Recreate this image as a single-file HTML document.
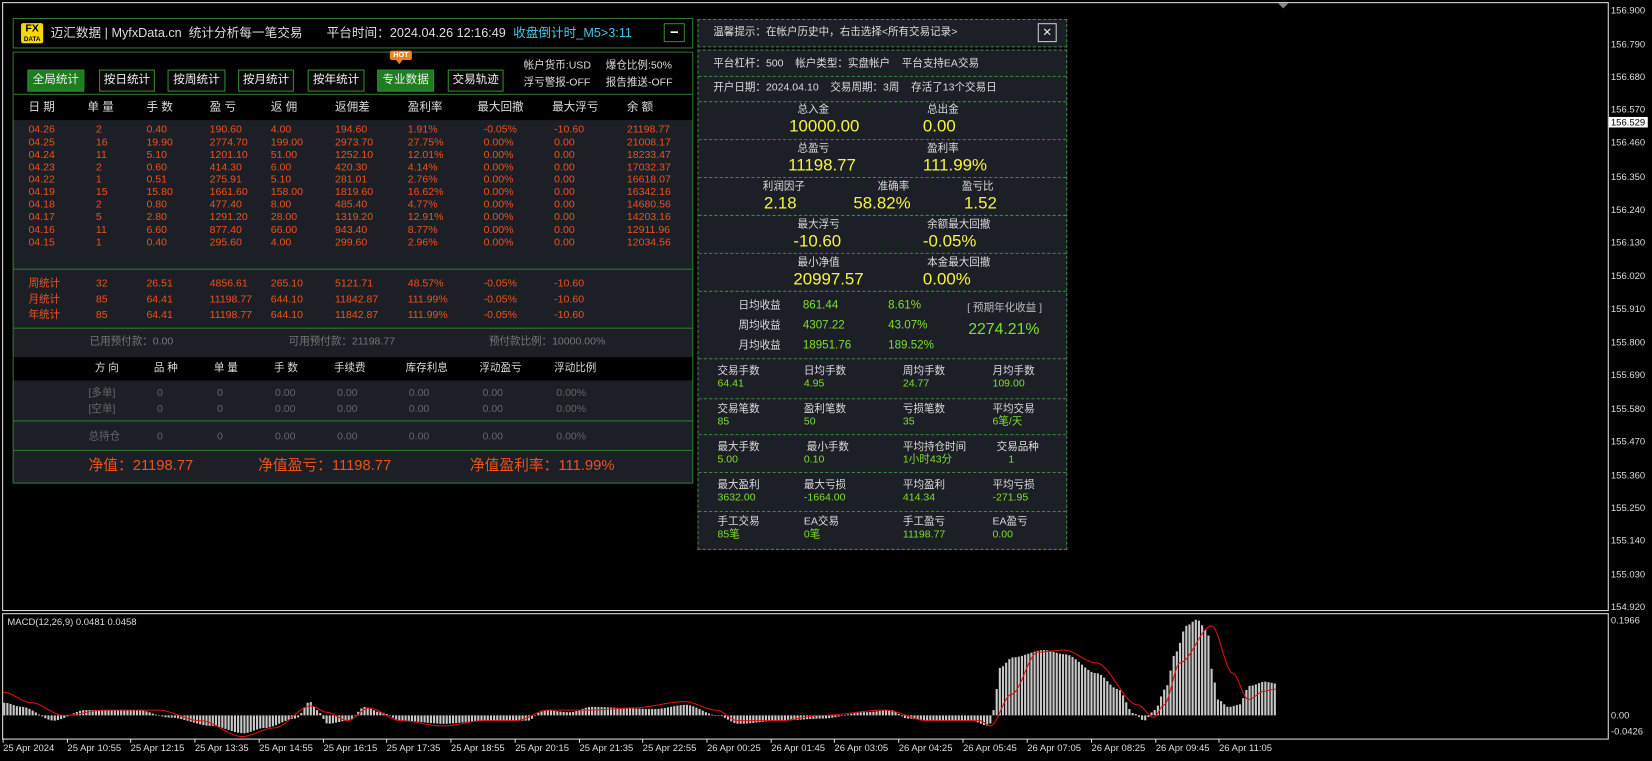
<!DOCTYPE html>
<html><head><meta charset="utf-8">
<style>
html,body{margin:0;padding:0;background:#000;width:1652px;height:760px;overflow:hidden}
#w{position:absolute;left:0;top:0;width:1568px;height:722px;transform:scale(1.05357);transform-origin:0 0;font-family:"Liberation Sans","Noto Sans CJK SC",sans-serif;color:#ddd}
#w div{white-space:nowrap}
.a{position:absolute;white-space:nowrap;line-height:14px}
.f11{font-size:11px}.f10{font-size:10px}
.o{color:#f0521c}.g{color:#777}.gg{color:#666}.y{color:#f5f53c;font-size:16px;line-height:18px}.gr{color:#7be02c}
.box{position:absolute;box-sizing:border-box}
.btn{position:absolute;top:66px;height:21px;box-sizing:border-box;border:1px solid #2f8a2f;font-size:11px;line-height:19px;text-align:center;color:#eee;background:#0a0a0a}
.btn.on{background:#1e7d1e}
.dl{position:absolute;left:663px;width:349px;border-top:1px dashed #3a8a3a;height:0}
.px{position:absolute;left:1529px;font-size:9px;color:#ddd;line-height:10px}
.tl{position:absolute;top:705px;font-size:9px;color:#ddd;line-height:10px}
</style></head><body><div id="w">
<div class="box" style="left:2px;top:2px;width:1525px;height:578px;border:1px solid #ddd"></div>
<div class="box" style="left:2px;top:582px;width:1525px;height:120px;border:1px solid #ddd"></div>
<div style="position:absolute;left:1213px;top:3px;width:0;height:0;border-left:5px solid transparent;border-right:5px solid transparent;border-top:5px solid #888"></div>
<div class="px" style="top:5px">156.900</div><div class="px" style="top:37px">156.790</div><div class="px" style="top:68px">156.680</div><div class="px" style="top:99px">156.570</div>
<div class="px" style="top:111px;background:#fff;color:#000;left:1527px;padding:0 2px">156.529</div>
<div class="px" style="top:130px">156.460</div><div class="px" style="top:163px">156.350</div><div class="px" style="top:194px">156.240</div><div class="px" style="top:225px">156.130</div><div class="px" style="top:257px">156.020</div><div class="px" style="top:288px">155.910</div><div class="px" style="top:320px">155.800</div><div class="px" style="top:351px">155.690</div><div class="px" style="top:383px">155.580</div><div class="px" style="top:414px">155.470</div><div class="px" style="top:446px">155.360</div><div class="px" style="top:477px">155.250</div><div class="px" style="top:508px">155.140</div><div class="px" style="top:540px">155.030</div><div class="px" style="top:571px">154.920</div>
<div class="px" style="top:584px">0.1966</div><div class="px" style="top:674px">0.00</div><div class="px" style="top:689px">-0.0426</div>
<div class="a f10" style="left:7px;top:583px;font-size:9px">MACD(12,26,9) 0.0481 0.0458</div>
<svg id="mc" style="position:absolute;left:0;top:0" width="1568" height="722"></svg>
<div class="tl" style="left:3px">25 Apr 2024</div><div class="tl" style="left:64px">25 Apr 10:55</div><div class="tl" style="left:124px">25 Apr 12:15</div><div class="tl" style="left:185px">25 Apr 13:35</div><div class="tl" style="left:246px">25 Apr 14:55</div><div class="tl" style="left:307px">25 Apr 16:15</div><div class="tl" style="left:367px">25 Apr 17:35</div><div class="tl" style="left:428px">25 Apr 18:55</div><div class="tl" style="left:489px">25 Apr 20:15</div><div class="tl" style="left:550px">25 Apr 21:35</div><div class="tl" style="left:610px">25 Apr 22:55</div><div class="tl" style="left:671px">26 Apr 00:25</div><div class="tl" style="left:732px">26 Apr 01:45</div><div class="tl" style="left:792px">26 Apr 03:05</div><div class="tl" style="left:853px">26 Apr 04:25</div><div class="tl" style="left:914px">26 Apr 05:45</div><div class="tl" style="left:975px">26 Apr 07:05</div><div class="tl" style="left:1036px">26 Apr 08:25</div><div class="tl" style="left:1097px">26 Apr 09:45</div><div class="tl" style="left:1157px">26 Apr 11:05</div>

<div class="box" style="left:12px;top:17px;width:646px;height:29px;border:1px solid #2f7a2f;background:#000"></div>
<div class="box" style="left:20px;top:22px;width:21px;height:19px;background:#f5d800;border-radius:2px;color:#000;font-weight:bold;text-align:center;font-size:10px;line-height:9px;padding-top:1px">FX<br><span style="font-size:6px;line-height:7px">DATA</span></div>
<div class="a" style="left:48px;top:24px;font-size:12px">迈汇数据 | MyfxData.cn&nbsp; 统计分析每一笔交易</div>
<div class="a" style="left:310px;top:24px;font-size:12px">平台时间：2024.04.26 12:16:49</div>
<div class="a" style="left:487px;top:24px;font-size:12px;color:#3ec8ea">收盘倒计时_M5&gt;3:11</div>
<div class="box" style="left:630px;top:22px;width:20px;height:18px;border:1px solid #2f8a2f;color:#fff;text-align:center;font-size:14px;line-height:15px;font-weight:bold">−</div>

<div class="box" style="left:12px;top:49px;width:646px;height:410px;border:1px solid #2f7a2f;background:#1d1f26"></div>
<div class="box" style="left:13px;top:50px;width:644px;height:64px;background:#000"></div>
<div class="btn on" style="left:26px;width:54px">全局统计</div>
<div class="btn" style="left:94px;width:53px">按日统计</div>
<div class="btn" style="left:159px;width:55px">按周统计</div>
<div class="btn" style="left:226px;width:53px">按月统计</div>
<div class="btn" style="left:292px;width:54px">按年统计</div>
<div class="btn on" style="left:358px;width:54px">专业数据</div>
<div class="btn" style="left:425px;width:53px">交易轨迹</div>
<div class="box" style="left:370px;top:48px;width:21px;height:9px;background:#f08020;border-radius:2px;color:#fff;font-size:7px;line-height:9px;text-align:center;font-weight:bold">HOT</div>
<div style="position:absolute;left:376px;top:57px;border-left:3px solid transparent;border-right:3px solid transparent;border-top:4px solid #f08020"></div>
<div class="a f10" style="left:497px;top:56px">帐户货币:USD</div><div class="a f10" style="left:575px;top:56px">爆仓比例:50%</div>
<div class="a f10" style="left:497px;top:72px">浮亏警报-OFF</div><div class="a f10" style="left:575px;top:72px">报告推送-OFF</div>
<div class="box" style="left:13px;top:89px;width:644px;height:1px;background:#2f7a2f"></div>
<div class="a f11" style="top:95px;left:27px">日 期</div><div class="a f11" style="top:95px;left:83px">单 量</div><div class="a f11" style="top:95px;left:139px">手 数</div><div class="a f11" style="top:95px;left:199px">盈 亏</div><div class="a f11" style="top:95px;left:257px">返 佣</div><div class="a f11" style="top:95px;left:318px">返佣差</div><div class="a f11" style="top:95px;left:387px">盈利率</div><div class="a f11" style="top:95px;left:453px">最大回撤</div><div class="a f11" style="top:95px;left:524px">最大浮亏</div><div class="a f11" style="top:95px;left:595px">余 额</div>

<div class="o f10" style="position:absolute;left:0;top:118px;line-height:11.85px">
<div style="position:absolute;left:27px">04.26<br>04.25<br>04.24<br>04.23<br>04.22<br>04.19<br>04.18<br>04.17<br>04.16<br>04.15</div>
<div style="position:absolute;left:91px">2<br>16<br>11<br>2<br>1<br>15<br>2<br>5<br>11<br>1</div>
<div style="position:absolute;left:139px">0.40<br>19.90<br>5.10<br>0.60<br>0.51<br>15.80<br>0.80<br>2.80<br>6.60<br>0.40</div>
<div style="position:absolute;left:199px">190.60<br>2774.70<br>1201.10<br>414.30<br>275.91<br>1661.60<br>477.40<br>1291.20<br>877.40<br>295.60</div>
<div style="position:absolute;left:257px">4.00<br>199.00<br>51.00<br>6.00<br>5.10<br>158.00<br>8.00<br>28.00<br>66.00<br>4.00</div>
<div style="position:absolute;left:318px">194.60<br>2973.70<br>1252.10<br>420.30<br>281.01<br>1819.60<br>485.40<br>1319.20<br>943.40<br>299.60</div>
<div style="position:absolute;left:387px">1.91%<br>27.75%<br>12.01%<br>4.14%<br>2.76%<br>16.62%<br>4.77%<br>12.91%<br>8.77%<br>2.96%</div>
<div style="position:absolute;left:459px">-0.05%<br>0.00%<br>0.00%<br>0.00%<br>0.00%<br>0.00%<br>0.00%<br>0.00%<br>0.00%<br>0.00%</div>
<div style="position:absolute;left:526px">-10.60<br>0.00<br>0.00<br>0.00<br>0.00<br>0.00<br>0.00<br>0.00<br>0.00<br>0.00</div>
<div style="position:absolute;left:595px">21198.77<br>21008.17<br>18233.47<br>17032.37<br>16618.07<br>16342.16<br>14680.56<br>14203.16<br>12911.96<br>12034.56</div>
</div>
<div class="box" style="left:13px;top:255px;width:644px;height:1px;background:#2f7a2f"></div>
<div class="o f10" style="position:absolute;left:0;top:262px;line-height:15px">
<div style="position:absolute;left:27px">周统计<br>月统计<br>年统计</div>
<div style="position:absolute;left:91px">32<br>85<br>85</div>
<div style="position:absolute;left:139px">26.51<br>64.41<br>64.41</div>
<div style="position:absolute;left:199px">4856.61<br>11198.77<br>11198.77</div>
<div style="position:absolute;left:257px">265.10<br>644.10<br>644.10</div>
<div style="position:absolute;left:318px">5121.71<br>11842.87<br>11842.87</div>
<div style="position:absolute;left:387px">48.57%<br>111.99%<br>111.99%</div>
<div style="position:absolute;left:459px">-0.05%<br>-0.05%<br>-0.05%</div>
<div style="position:absolute;left:526px">-10.60<br>-10.60<br>-10.60</div>
</div>
<div class="box" style="left:13px;top:311px;width:644px;height:1px;background:#2f7a2f"></div>
<div class="a f10 g" style="left:85px;top:318px">已用预付款：0.00</div>
<div class="a f10 g" style="left:274px;top:318px">可用预付款：21198.77</div>
<div class="a f10 g" style="left:464px;top:318px">预付款比例：10000.00%</div>
<div class="box" style="left:13px;top:339px;width:644px;height:22px;background:#000"></div>
<div class="a f10" style="top:343px;left:90px">方 向</div><div class="a f10" style="top:343px;left:146px">品 种</div><div class="a f10" style="top:343px;left:203px">单 量</div><div class="a f10" style="top:343px;left:260px">手 数</div><div class="a f10" style="top:343px;left:317px">手续费</div><div class="a f10" style="top:343px;left:385px">库存利息</div><div class="a f10" style="top:343px;left:455px">浮动盈亏</div><div class="a f10" style="top:343px;left:526px">浮动比例</div>
<div class="gg f10" style="position:absolute;left:0;top:366px;line-height:15px">
<div style="position:absolute;left:84px">[多单]<br>[空单]</div><div style="position:absolute;left:149px">0<br>0</div><div style="position:absolute;left:206px">0<br>0</div><div style="position:absolute;left:261px">0.00<br>0.00</div><div style="position:absolute;left:320px">0.00<br>0.00</div><div style="position:absolute;left:388px">0.00<br>0.00</div><div style="position:absolute;left:458px">0.00<br>0.00</div><div style="position:absolute;left:528px">0.00%<br>0.00%</div>
</div>
<div class="box" style="left:13px;top:399px;width:644px;height:1px;background:#2f7a2f"></div>
<div class="gg f10" style="position:absolute;left:0;top:408px;line-height:14px">
<div style="position:absolute;left:84px">总持仓</div><div style="position:absolute;left:149px">0</div><div style="position:absolute;left:206px">0</div><div style="position:absolute;left:261px">0.00</div><div style="position:absolute;left:320px">0.00</div><div style="position:absolute;left:388px">0.00</div><div style="position:absolute;left:458px">0.00</div><div style="position:absolute;left:528px">0.00%</div>
</div>
<div class="box" style="left:13px;top:427px;width:644px;height:1px;background:#2f7a2f"></div>
<div class="a o" style="left:84px;top:433px;font-size:14px;line-height:16px">净值：21198.77</div>
<div class="a o" style="left:245px;top:433px;font-size:14px;line-height:16px">净值盈亏：11198.77</div>
<div class="a o" style="left:446px;top:433px;font-size:14px;line-height:16px">净值盈利率：111.99%</div>

<div class="box" style="left:662px;top:18px;width:351px;height:27px;border:1px dashed #3a8a3a;background:#1d1f26"></div>
<div class="a f10" style="left:677px;top:24px">温馨提示：在帐户历史中，右击选择&lt;所有交易记录&gt;</div>
<div class="box" style="left:985px;top:22px;width:18px;height:18px;border:1px solid #ccc;color:#eee;text-align:center;font-size:11px;line-height:16px">✕</div>
<div class="box" style="left:662px;top:47px;width:351px;height:475px;border:1px dashed #3a8a3a;background:#1d1f26"></div>
<div class="a f10" style="left:677px;top:54px">平台杠杆：500&nbsp;&nbsp;&nbsp; 帐户类型：实盘帐户&nbsp;&nbsp;&nbsp; 平台支持EA交易</div>
<div class="dl" style="top:72px"></div>
<div class="a f10" style="left:677px;top:77px">开户日期：2024.04.10&nbsp;&nbsp;&nbsp; 交易周期：3周&nbsp;&nbsp;&nbsp; 存活了13个交易日</div>
<div class="dl" style="top:96px"></div>
<div class="a f10" style="left:757px;top:98px">总入金</div><div class="a f10" style="left:880px;top:98px">总出金</div>
<div class="a y" style="left:749px;top:112px">10000.00</div><div class="a y" style="left:876px;top:112px">0.00</div>
<div class="dl" style="top:132px"></div>
<div class="a f10" style="left:757px;top:135px">总盈亏</div><div class="a f10" style="left:880px;top:135px">盈利率</div>
<div class="a y" style="left:748px;top:149px">11198.77</div><div class="a y" style="left:876px;top:149px">111.99%</div>
<div class="dl" style="top:168px"></div>
<div class="a f10" style="left:724px;top:171px">利润因子</div><div class="a f10" style="left:833px;top:171px">准确率</div><div class="a f10" style="left:913px;top:171px">盈亏比</div>
<div class="a y" style="left:725px;top:185px">2.18</div><div class="a y" style="left:810px;top:185px">58.82%</div><div class="a y" style="left:915px;top:185px">1.52</div>
<div class="dl" style="top:204px"></div>
<div class="a f10" style="left:757px;top:207px">最大浮亏</div><div class="a f10" style="left:880px;top:207px">余额最大回撤</div>
<div class="a y" style="left:753px;top:221px">-10.60</div><div class="a y" style="left:876px;top:221px">-0.05%</div>
<div class="dl" style="top:240px"></div>
<div class="a f10" style="left:757px;top:243px">最小净值</div><div class="a f10" style="left:880px;top:243px">本金最大回撤</div>
<div class="a y" style="left:753px;top:257px">20997.57</div><div class="a y" style="left:876px;top:257px">0.00%</div>
<div class="dl" style="top:276px"></div>
<div class="a f10" style="left:701px;top:284px">日均收益</div><div class="a gr" style="left:762px;top:283px;font-size:11px">861.44</div><div class="a gr" style="left:843px;top:283px;font-size:11px">8.61%</div>
<div class="a f10" style="left:701px;top:303px">周均收益</div><div class="a gr" style="left:762px;top:302px;font-size:11px">4307.22</div><div class="a gr" style="left:843px;top:302px;font-size:11px">43.07%</div>
<div class="a f10" style="left:701px;top:322px">月均收益</div><div class="a gr" style="left:762px;top:321px;font-size:11px">18951.76</div><div class="a gr" style="left:843px;top:321px;font-size:11px">189.52%</div>
<div class="a f10" style="left:918px;top:286px;color:#bbb">[ 预期年化收益 ]</div>
<div class="a gr" style="left:919px;top:304px;font-size:15px;line-height:18px">2274.21%</div>
<div class="dl" style="top:340px"></div>
<div class="f10" style="position:absolute;left:0;top:347px;line-height:12px">
<div style="position:absolute;left:681px">交易手数<br><span class="gr">64.41</span></div><div style="position:absolute;left:763px">日均手数<br><span class="gr">4.95</span></div><div style="position:absolute;left:857px">周均手数<br><span class="gr">24.77</span></div><div style="position:absolute;left:942px">月均手数<br><span class="gr">109.00</span></div>
</div>
<div class="dl" style="top:378px"></div>
<div class="f10" style="position:absolute;left:0;top:383px;line-height:12px">
<div style="position:absolute;left:681px">交易笔数<br><span class="gr">85</span></div><div style="position:absolute;left:763px">盈利笔数<br><span class="gr">50</span></div><div style="position:absolute;left:857px">亏损笔数<br><span class="gr">35</span></div><div style="position:absolute;left:942px">平均交易<br><span class="gr">6笔/天</span></div>
</div>
<div class="dl" style="top:412px"></div>
<div class="f10" style="position:absolute;left:0;top:419px;line-height:12px">
<div style="position:absolute;left:681px">最大手数<br><span class="gr">5.00</span></div><div style="position:absolute;left:763px">&nbsp;最小手数<br><span class="gr">0.10</span></div><div style="position:absolute;left:857px">平均持仓时间<br><span class="gr">1小时43分</span></div><div style="position:absolute;left:946px">交易品种<br><span class="gr">&nbsp;&nbsp;&nbsp;&nbsp;1</span></div>
</div>
<div class="dl" style="top:448px"></div>
<div class="f10" style="position:absolute;left:0;top:455px;line-height:12px">
<div style="position:absolute;left:681px">最大盈利<br><span class="gr">3632.00</span></div><div style="position:absolute;left:763px">最大亏损<br><span class="gr">-1664.00</span></div><div style="position:absolute;left:857px">平均盈利<br><span class="gr">414.34</span></div><div style="position:absolute;left:942px">平均亏损<br><span class="gr">-271.95</span></div>
</div>
<div class="dl" style="top:485px"></div>
<div class="f10" style="position:absolute;left:0;top:490px;line-height:12px">
<div style="position:absolute;left:681px">手工交易<br><span class="gr">85笔</span></div><div style="position:absolute;left:763px">EA交易<br><span class="gr">0笔</span></div><div style="position:absolute;left:857px">手工盈亏<br><span class="gr">11198.77</span></div><div style="position:absolute;left:942px">EA盈亏<br><span class="gr">0.00</span></div>
</div>
</div>
<script>
(function(){
var H=[[3,12],[20,8],[50,-5],[80,5],[130,5],[160,-2],[200,-10],[230,-17],[250,-12],[280,-3],[293,13],[300,5],[310,-8],[330,-5],[345,8],[360,3],[380,-5],[420,-8],[460,-5],[500,-5],[515,5],[540,3],[560,8],[620,6],[650,10],[680,0],[700,-8],[740,-5],[780,-3],[820,3],[845,5],[860,-3],[880,-5],[920,-5],[938,-10],[942,5],[948,45],[960,55],[990,62],[1010,58],[1040,40],[1060,25],[1075,2],[1085,-5],[1095,5],[1105,25],[1115,60],[1125,85],[1135,91],[1145,80],[1150,40],[1155,15],[1165,8],[1175,10],[1185,28],[1200,32],[1211,30]];
var S=[[3,22],[30,12],[60,0],[100,5],[150,5],[190,-5],[230,-20],[260,-12],[295,9],[310,3],[330,-5],[350,7],[380,-5],[420,-10],[460,-5],[490,-5],[520,5],[560,5],[600,7],[650,13],[680,5],[700,-5],[740,-5],[780,0],[840,5],[880,-5],[930,-5],[940,-10],[960,20],[985,60],[1010,62],[1040,50],[1080,10],[1095,-2],[1105,10],[1120,50],[1150,85],[1170,40],[1185,15],[1200,23],[1211,25]];
function f(P,x){for(var i=0;i<P.length-1;i++){if(x<=P[i+1][0]){var t=(x-P[i][0])/(P[i+1][0]-P[i][0]);t=t*t*(3-2*t);return P[i][1]+(P[i+1][1]-P[i][1])*t;}}return P[P.length-1][1];}
var z=679,s='';
for(var x=3;x<=1211;x+=3){var h=f(H,x);var y=h>0?z-h:z;s+='<rect x="'+x+'" y="'+y.toFixed(1)+'" width="2" height="'+Math.max(Math.abs(h),0.5).toFixed(1)+'" fill="#c8c8c8"/>';}
var p='';for(var x=3;x<=1211;x+=2){p+=(x==3?'M':'L')+x+','+(z-f(S,x)).toFixed(1);}
s+='<path d="'+p+'" stroke="#e01010" stroke-width="1" fill="none"/>';
var tx=[3,64,124,185,246,307,367,428,489,550,610,671,732,792,853,914,975,1036,1097,1157];
tx.forEach(function(x){s+='<line x1="'+x+'" y1="701" x2="'+x+'" y2="705" stroke="#ddd"/>';});
document.getElementById('mc').innerHTML=s;
})();
</script>
</body></html>
